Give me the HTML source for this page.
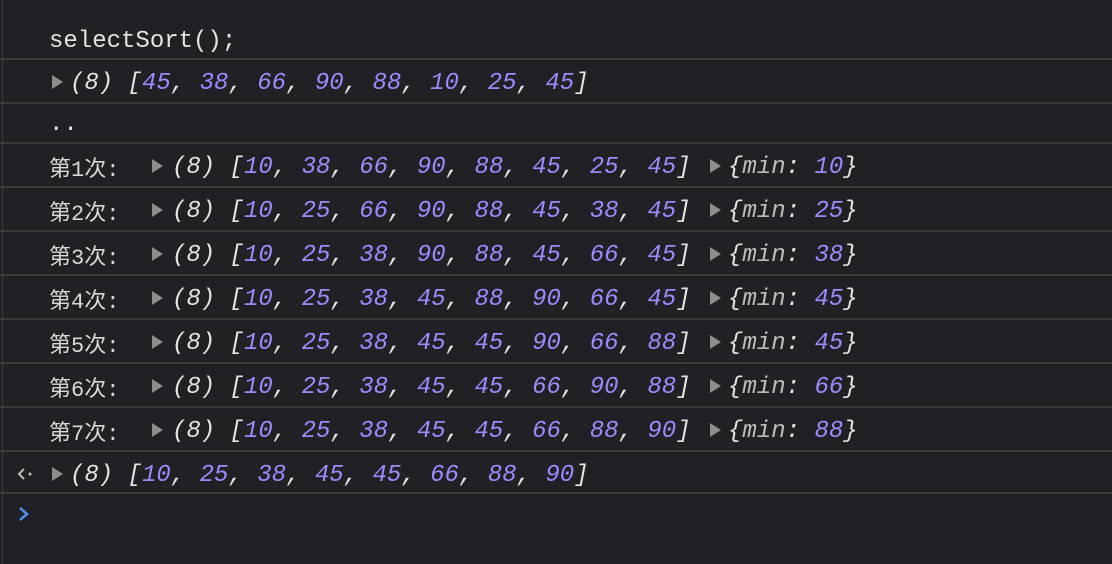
<!DOCTYPE html>
<html><head><meta charset="utf-8"><style>
html,body{margin:0;padding:0;background:#202124;}
body{width:1112px;height:564px;position:relative;overflow:hidden;font-family:"Liberation Mono","Noto Sans CJK SC",monospace;font-size:24px;color:#e3e3e3;}
.lb{position:absolute;left:2px;top:0;width:1px;height:564px;background:#3a3a3c;}
.sep{position:absolute;left:0;width:1112px;height:2px;background:#3a3a3d;}
.t{position:absolute;white-space:pre;line-height:30px;}
.i{font-style:italic;}
.n{color:#9b8bff;}
.p{color:#bdbdbd;}
.tri{position:absolute;width:0;height:0;border-top:7px solid transparent;border-bottom:7px solid transparent;border-left:11px solid #8d8d8d;}
.cj{font-family:"Liberation Mono","Noto Sans CJK SC",sans-serif;font-size:22px;color:#d8d8d8;}
</style></head><body>
<div class="lb"></div>
<div class="t" style="left:49px;top:27px">selectSort();</div>
<div class="sep" style="top:58px"></div>
<div class="tri" style="left:52px;top:75px"></div>
<div class="t i" style="left:70px;top:69px">(8) [<span class="n">45</span>, <span class="n">38</span>, <span class="n">66</span>, <span class="n">90</span>, <span class="n">88</span>, <span class="n">10</span>, <span class="n">25</span>, <span class="n">45</span>]</div>
<div class="sep" style="top:102px"></div>
<div class="t" style="left:49px;top:110px">..</div>
<div class="sep" style="top:142px"></div>

<div class="t cj" style="left:49px;top:156px">第1次:</div>
<div class="tri" style="left:152px;top:159px"></div>
<div class="t i" style="left:172px;top:153px">(8) [<span class="n">10</span>, <span class="n">38</span>, <span class="n">66</span>, <span class="n">90</span>, <span class="n">88</span>, <span class="n">45</span>, <span class="n">25</span>, <span class="n">45</span>]</div>
<div class="tri" style="left:710px;top:159px"></div>
<div class="t i" style="left:728px;top:153px">{<span class="p">min</span>: <span class="n">10</span>}</div>
<div class="sep" style="top:186px"></div>

<div class="t cj" style="left:49px;top:200px">第2次:</div>
<div class="tri" style="left:152px;top:203px"></div>
<div class="t i" style="left:172px;top:197px">(8) [<span class="n">10</span>, <span class="n">25</span>, <span class="n">66</span>, <span class="n">90</span>, <span class="n">88</span>, <span class="n">45</span>, <span class="n">38</span>, <span class="n">45</span>]</div>
<div class="tri" style="left:710px;top:203px"></div>
<div class="t i" style="left:728px;top:197px">{<span class="p">min</span>: <span class="n">25</span>}</div>
<div class="sep" style="top:230px"></div>

<div class="t cj" style="left:49px;top:244px">第3次:</div>
<div class="tri" style="left:152px;top:247px"></div>
<div class="t i" style="left:172px;top:241px">(8) [<span class="n">10</span>, <span class="n">25</span>, <span class="n">38</span>, <span class="n">90</span>, <span class="n">88</span>, <span class="n">45</span>, <span class="n">66</span>, <span class="n">45</span>]</div>
<div class="tri" style="left:710px;top:247px"></div>
<div class="t i" style="left:728px;top:241px">{<span class="p">min</span>: <span class="n">38</span>}</div>
<div class="sep" style="top:274px"></div>

<div class="t cj" style="left:49px;top:288px">第4次:</div>
<div class="tri" style="left:152px;top:291px"></div>
<div class="t i" style="left:172px;top:285px">(8) [<span class="n">10</span>, <span class="n">25</span>, <span class="n">38</span>, <span class="n">45</span>, <span class="n">88</span>, <span class="n">90</span>, <span class="n">66</span>, <span class="n">45</span>]</div>
<div class="tri" style="left:710px;top:291px"></div>
<div class="t i" style="left:728px;top:285px">{<span class="p">min</span>: <span class="n">45</span>}</div>
<div class="sep" style="top:318px"></div>

<div class="t cj" style="left:49px;top:332px">第5次:</div>
<div class="tri" style="left:152px;top:335px"></div>
<div class="t i" style="left:172px;top:329px">(8) [<span class="n">10</span>, <span class="n">25</span>, <span class="n">38</span>, <span class="n">45</span>, <span class="n">45</span>, <span class="n">90</span>, <span class="n">66</span>, <span class="n">88</span>]</div>
<div class="tri" style="left:710px;top:335px"></div>
<div class="t i" style="left:728px;top:329px">{<span class="p">min</span>: <span class="n">45</span>}</div>
<div class="sep" style="top:362px"></div>

<div class="t cj" style="left:49px;top:376px">第6次:</div>
<div class="tri" style="left:152px;top:379px"></div>
<div class="t i" style="left:172px;top:373px">(8) [<span class="n">10</span>, <span class="n">25</span>, <span class="n">38</span>, <span class="n">45</span>, <span class="n">45</span>, <span class="n">66</span>, <span class="n">90</span>, <span class="n">88</span>]</div>
<div class="tri" style="left:710px;top:379px"></div>
<div class="t i" style="left:728px;top:373px">{<span class="p">min</span>: <span class="n">66</span>}</div>
<div class="sep" style="top:406px"></div>

<div class="t cj" style="left:49px;top:420px">第7次:</div>
<div class="tri" style="left:152px;top:423px"></div>
<div class="t i" style="left:172px;top:417px">(8) [<span class="n">10</span>, <span class="n">25</span>, <span class="n">38</span>, <span class="n">45</span>, <span class="n">45</span>, <span class="n">66</span>, <span class="n">88</span>, <span class="n">90</span>]</div>
<div class="tri" style="left:710px;top:423px"></div>
<div class="t i" style="left:728px;top:417px">{<span class="p">min</span>: <span class="n">88</span>}</div>
<div class="sep" style="top:450px"></div>

<svg style="position:absolute;left:16px;top:466px" width="20" height="16"><path d="M8 3 L3 8 L8 13" stroke="#bdbdbd" stroke-width="2" fill="none"/><circle cx="14" cy="8" r="1.5" fill="#bdbdbd"/></svg>
<div class="tri" style="left:52px;top:467px"></div>
<div class="t i" style="left:70px;top:461px">(8) [<span class="n">10</span>, <span class="n">25</span>, <span class="n">38</span>, <span class="n">45</span>, <span class="n">45</span>, <span class="n">66</span>, <span class="n">88</span>, <span class="n">90</span>]</div>
<div class="sep" style="top:492px"></div>

<svg style="position:absolute;left:17px;top:506px" width="14" height="16"><path d="M3 2 L10 8 L3 14" stroke="#4a8ff0" stroke-width="2.5" fill="none"/></svg>
</body></html>
